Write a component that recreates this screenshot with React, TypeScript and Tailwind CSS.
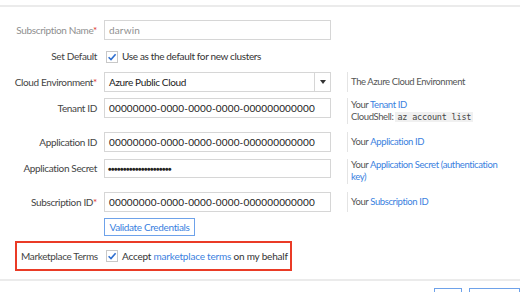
import React from 'react';

const FONT = { fontFamily: 'Lato, "Open Sans", sans-serif' };
const MONO = { fontFamily: '"DejaVu Sans Mono", monospace' };

function Check() {
  return (
    <span className="flex h-[12px] w-[12px] shrink-0 items-center justify-center border border-[#c8c8c8] bg-white">
      <svg width="10" height="10" viewBox="0 0 10 10">
        <path d="M1.6 5.2 L4 7.6 L8.6 2.2" fill="none" stroke="#2f6fd0" strokeWidth="1.6" />
      </svg>
    </span>
  );
}

function Label({ text, required, muted }: { text: string; required?: boolean; muted?: boolean }) {
  return (
    <div className={`w-[98px] shrink-0 pr-[1px] text-right ${muted ? 'text-[#8f8f8f]' : 'text-[#444]'}`}>
      {text}
      {required && <span className="text-[#e0322a]">*</span>}
    </div>
  );
}

function Input({ value, muted }: { value: string; muted?: boolean }) {
  return (
    <div
      className={`flex h-[20px] w-[227px] shrink-0 items-center border border-[#d6d6d6] bg-white px-[4px] tracking-[0.15px] ${
        muted ? 'text-[#8f8f8f]' : 'text-[#222]'
      }`}
    >
      {value}
    </div>
  );
}

function Help({ children }: { children: React.ReactNode }) {
  return (
    <div className="ml-[10px] flex h-[20px] items-center border-l border-[#e4e4e4] pl-[3px] text-[9.5px] tracking-[-0.4px] text-[#555]">
      {children}
    </div>
  );
}

const ZEROS = '00000000-0000-0000-0000-000000000000';

export default function App() {
  return (
    <div className="h-[292px] w-[520px] overflow-hidden bg-white text-[10px] tracking-[-0.35px]" style={FONT}>
      <div className="h-[7px] border-b-2 border-[#ebebeb]" />

      {/* subscription name */}
      <div className="mt-[13px] flex h-[20px] items-center gap-[6px]">
        <Label text="Subscription Name" required muted />
        <Input value="darwin" muted />
      </div>

      {/* set default */}
      <div className="mt-[10px] flex h-[13px] items-center gap-[6px]">
        <Label text="Set Default" />
        <div className="ml-[2px] flex items-center gap-[4px] text-[#333]">
          <Check />
          Use as the default for new clusters
        </div>
      </div>

      {/* cloud env */}
      <div className="mt-[9px] flex h-[20px] items-center gap-[6px]">
        <Label text="Cloud Environment" required />
        <div className="flex h-[20px] w-[227px] shrink-0 items-center border border-[#d6d6d6] bg-white text-[#222]">
          <div className="flex-1 px-[4px]">Azure Public Cloud</div>
          <div className="flex h-full w-[16px] items-center justify-center border-l border-[#d6d6d6]">
            <svg width="6" height="4" viewBox="0 0 6 4">
              <path d="M0 0 H6 L3 4 Z" fill="#333" />
            </svg>
          </div>
        </div>
        <Help>The Azure Cloud Environment</Help>
      </div>

      {/* tenant */}
      <div className="mt-[6px] flex h-[26px] items-start gap-[6px]">
        <div className="flex h-[20px] items-center">
          <Label text="Tenant ID" />
        </div>
        <Input value={ZEROS} />
        <div className="ml-[10px] h-[26px] border-l border-[#e4e4e4] pt-[1px] pl-[3px] text-[9.5px] leading-[12px] tracking-[-0.4px] text-[#555]">
          <div>
            Your <span className="text-[#3a7fe0]">Tenant ID</span>
          </div>
          <div>
            CloudShell:{' '}
            <code className="bg-[#f0f0f0] px-[2px] text-[8.5px] tracking-[-0.2px] text-[#444]" style={MONO}>
              az account list
            </code>
          </div>
        </div>
      </div>

      {/* application id */}
      <div className="mt-[8px] flex h-[20px] items-center gap-[6px]">
        <Label text="Application ID" />
        <Input value={ZEROS} />
        <Help>
          Your&nbsp;<span className="text-[#3a7fe0]">Application ID</span>
        </Help>
      </div>

      {/* application secret */}
      <div className="mt-[7px] flex h-[25px] items-start gap-[6px]">
        <div className="flex h-[19px] items-center">
          <Label text="Application Secret" />
        </div>
        <div className="flex h-[19px] w-[227px] shrink-0 items-center border border-[#d6d6d6] bg-white px-[3px] text-[#222]">
          <span className="text-[6px] tracking-[-0.6px]">●●●●●●●●●●●●●●●●●●●●●</span>
        </div>
        <div className="ml-[10px] h-[25px] w-[156px] border-l border-[#e4e4e4] pl-[3px] text-[9.5px] leading-[12px] tracking-[-0.4px] text-[#555]">
          Your <span className="text-[#3a7fe0]">Application Secret (authentication key)</span>
        </div>
      </div>

      {/* subscription id */}
      <div className="mt-[8px] flex h-[20px] items-center gap-[6px]">
        <Label text="Subscription ID" required />
        <Input value={ZEROS} />
        <Help>
          Your&nbsp;<span className="text-[#3a7fe0]">Subscription ID</span>
        </Help>
      </div>

      {/* validate */}
      <div className="mt-[6px] pl-[104px]">
        <button className="h-[18px] w-[91px] border border-[#6ea2ea] bg-white text-[10px] text-[#3a7fe0]">
          Validate Credentials
        </button>
      </div>

      {/* marketplace */}
      <div className="ml-[15px] mt-[5px] flex h-[30px] w-[277px] items-center border-2 border-[#ea3b26]">
        <div className="w-[89px] pl-[4px] text-[#444]">Marketplace Terms</div>
        <div className="flex items-center gap-[4px] tracking-[-0.2px] text-[#333]">
          <Check />
          <span>
            Accept <span className="text-[#3a7fe0]">marketplace terms</span> on my behalf
          </span>
        </div>
      </div>

      <div className="mt-[8px] border-t-2 border-[#ebebeb]" />
      <div className="mt-[7px] flex gap-[7px] pl-[434px]">
        <div className="h-[12px] w-[32px] border border-b-0 border-[#6ea2ea]" />
        <div className="h-[12px] w-[60px] border border-b-0 border-[#6ea2ea]" />
      </div>
    </div>
  );
}
